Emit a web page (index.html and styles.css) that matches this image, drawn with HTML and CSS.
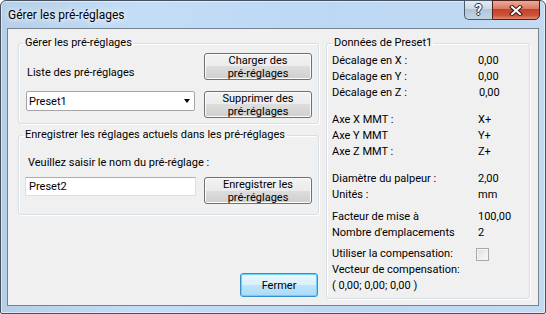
FILE: index.html
```html
<!DOCTYPE html>
<html lang="fr">
<head>
    <meta charset="UTF-8">
    <meta name="viewport" content="width=device-width, initial-scale=1.0">
    <title>Gérer les pré-réglages</title>
    <link rel="stylesheet" href="styles.css">
</head>
<body>

    <div class="window">
        <div class="titlebar">
            <span class="title">Gérer les pré-réglages</span>
            <div class="caption-buttons">
                <span class="cap-help">?</span>
                <span class="cap-close">
                    <svg width="14" height="11" viewBox="0 0 14 11">
                        <path d="M3 2 L11 9 M11 2 L3 9" stroke="#3a1712" stroke-width="4" stroke-linecap="square"/>
                        <path d="M3 2 L11 9 M11 2 L3 9" stroke="#fff" stroke-width="2" stroke-linecap="square"/>
                    </svg>
                </span>
            </div>
        </div>

        <div class="client">
            <div class="left">
                <fieldset class="group group-manage">
                    <legend>Gérer les pré-réglages</legend>
                    <div class="form-grid">
                        <span class="list-label">Liste des pré-réglages</span>
                        <button class="btn">Charger des<br>pré-réglages</button>
                        <div class="combo">
                            <span>Preset1</span>
                            <span class="arrow"></span>
                        </div>
                        <button class="btn">Supprimer des<br>pré-réglages</button>
                    </div>
                </fieldset>

                <fieldset class="group group-save">
                    <legend>Enregistrer les réglages actuels dans les pré-réglages</legend>
                    <div class="save-label">Veuillez saisir le nom du pré-réglage :</div>
                    <div class="form-grid save-row">
                        <input class="name-input" type="text" value="Preset2">
                        <button class="btn">Enregistrer les<br>pré-réglages</button>
                    </div>
                </fieldset>

                <div class="footer">
                    <button class="btn btn-default">Fermer</button>
                </div>
            </div>

            <fieldset class="group group-data">
                <legend>Données de Preset1</legend>
                <div class="section">
                    <div class="row"><span>Décalage en X :</span><span>0,00</span></div>
                    <div class="row"><span>Décalage en Y :</span><span>0,00</span></div>
                    <div class="row"><span>Décalage en Z :</span><span class="nudge">0,00</span></div>
                </div>
                <div class="section gap-lg">
                    <div class="row"><span>Axe X MMT :</span><span>X+</span></div>
                    <div class="row"><span>Axe Y MMT</span><span>Y+</span></div>
                    <div class="row"><span>Axe Z MMT :</span><span>Z+</span></div>
                </div>
                <div class="section gap-lg">
                    <div class="row"><span>Diamètre du palpeur :</span><span>2,00</span></div>
                    <div class="row"><span>Unités :</span><span>mm</span></div>
                </div>
                <div class="section gap-sm">
                    <div class="row"><span>Facteur de mise à</span><span>100,00</span></div>
                    <div class="row"><span>Nombre d'emplacements</span><span>2</span></div>
                </div>
                <div class="section gap-sm">
                    <div class="row"><span>Utiliser la compensation:</span><span class="checkbox"></span></div>
                    <div class="row"><span>Vecteur de compensation:</span></div>
                    <div class="row"><span>( 0,00; 0,00; 0,00 )</span></div>
                </div>
            </fieldset>
        </div>
    </div>

</body>
</html>
```

FILE: styles.css
```css
body {
    margin: 0;
    font-family: Roboto, "Noto Sans", sans-serif;
    font-size: 11px;
    color: #000;
}
.window {
    width: 546px;
    height: 314px;
    box-sizing: border-box;
    border: 1px solid #46515d;
    border-radius: 6px 6px 2px 2px;
    padding: 0 6px 7px;
    display: flex;
    flex-direction: column;
    background: linear-gradient(to right, #b6cfe8, #c4ddf7 25%, #bcd8f5 60%, #c3daf1);
    box-shadow: inset 0 0 0 1px rgba(255, 255, 255, 0.5);
}
.titlebar {
    height: 27px;
    flex-shrink: 0;
    display: flex;
    align-items: flex-start;
}
.title {
    padding: 6px 0 0 1px;
    font-size: 12px;
    line-height: 16px;
    text-shadow: 0 0 8px #fff, 0 0 4px #fff;
}
.caption-buttons {
    display: flex;
    margin: -1px -1px 0 auto;
}
.cap-help, .cap-close {
    height: 20px;
    box-sizing: border-box;
    display: flex;
    align-items: center;
    justify-content: center;
}
.cap-help {
    width: 28px;
    border: 1px solid #4a5a6d;
    border-right: none;
    border-radius: 0 0 0 5px;
    background: linear-gradient(#e3ebf4, #cbd8e6 45%, #b2c3d8 45%, #c4d4e6);
    color: #fff;
    font-size: 14px;
    font-weight: bold;
    text-shadow: 1px 0 0 #25323f, -1px 0 0 #25323f, 0 1px 0 #25323f, 0 -1px 0 #25323f;
}
.cap-close {
    width: 48px;
    border: 1px solid #4d2019;
    border-radius: 0 0 5px 0;
    background: linear-gradient(#eaab9c, #d97862 45%, #c4402a 45%, #cd5339 80%, #e38a70);
}
.client {
    flex: 1;
    display: flex;
    gap: 7px;
    padding: 6px 8px 6px 10px;
    border: 1px solid #76838f;
    background-color: #f0f0f0;
}
.left {
    width: 301px;
    display: flex;
    flex-direction: column;
}
.group {
    margin: 0;
    min-width: 0;
    border: 1px solid #d5dfe5;
    border-radius: 3px;
    box-shadow: inset 1px 1px 0 #fff, 1px 1px 0 #fff;
}
.group legend {
    padding: 0 2px;
    line-height: 16px;
}
.group-manage legend, .group-save legend {
    margin-left: -3px;
}
.group-manage {
    padding: 2px 6px 5px 7px;
}
.form-grid {
    display: grid;
    grid-template-columns: 169px 108px;
    column-gap: 9px;
    row-gap: 11px;
    align-items: start;
}
.list-label {
    align-self: end;
    padding-left: 1px;
    line-height: 15px;
}
.btn {
    height: 27px;
    padding: 0;
    font: inherit;
    line-height: 13px;
    color: #000;
    border: 1px solid #707070;
    border-radius: 3px;
    background: linear-gradient(#f2f2f2, #ebebeb 50%, #dddddd 50%, #cfcfcf);
    box-shadow: inset 0 0 0 1px #fbfbfb;
}
.combo {
    height: 20px;
    box-sizing: border-box;
    display: flex;
    align-items: center;
    justify-content: space-between;
    padding: 0 4px 0 2px;
    background-color: #fff;
    border: 1px solid #a5a5a5;
    border-radius: 2px;
}
.arrow {
    width: 0;
    height: 0;
    border-left: 3.5px solid transparent;
    border-right: 3.5px solid transparent;
    border-top: 4px solid #000;
}
.group-save {
    margin-top: 3px;
    padding: 12px 6px 10px 7px;
}
.save-label {
    padding-left: 2px;
    line-height: 15px;
}
.save-row {
    margin-top: 7px;
}
.name-input {
    height: 19px;
    box-sizing: border-box;
    margin: 0 0 0 -1px;
    width: 171px;
    padding: 0 3px;
    font: inherit;
    color: #000;
    background-color: #fff;
    border: 1px solid #dbdfe6;
    border-top-color: #abadb3;
    outline: none;
}
.footer {
    margin-top: auto;
    display: flex;
    justify-content: flex-end;
    padding: 0 1px 2px 0;
}
.btn-default {
    width: 78px;
    height: 24px;
    border-color: #3590cc;
    background: linear-gradient(#eaf6fd, #d9f0fc 50%, #bee6fd 50%, #a9dbf6);
    box-shadow: inset 0 0 0 1px #6fd0f7;
}
.group-data {
    width: 204px;
    box-sizing: border-box;
    padding: 2px 4px 0 5px;
}
.row {
    display: grid;
    grid-template-columns: 146px auto;
    align-items: center;
    height: 16px;
    line-height: 16px;
}
.gap-lg {
    margin-top: 11px;
}
.gap-sm {
    margin-top: 5.5px;
}
.nudge {
    padding-left: 1px;
}
.checkbox {
    width: 13px;
    height: 13px;
    box-sizing: border-box;
    margin-left: -2px;
    border: 1px solid #a9a9a9;
    background: linear-gradient(135deg, #dedede, #fbfbfb);
    box-shadow: inset 0 0 0 1px #f3f3f3;
}
```
